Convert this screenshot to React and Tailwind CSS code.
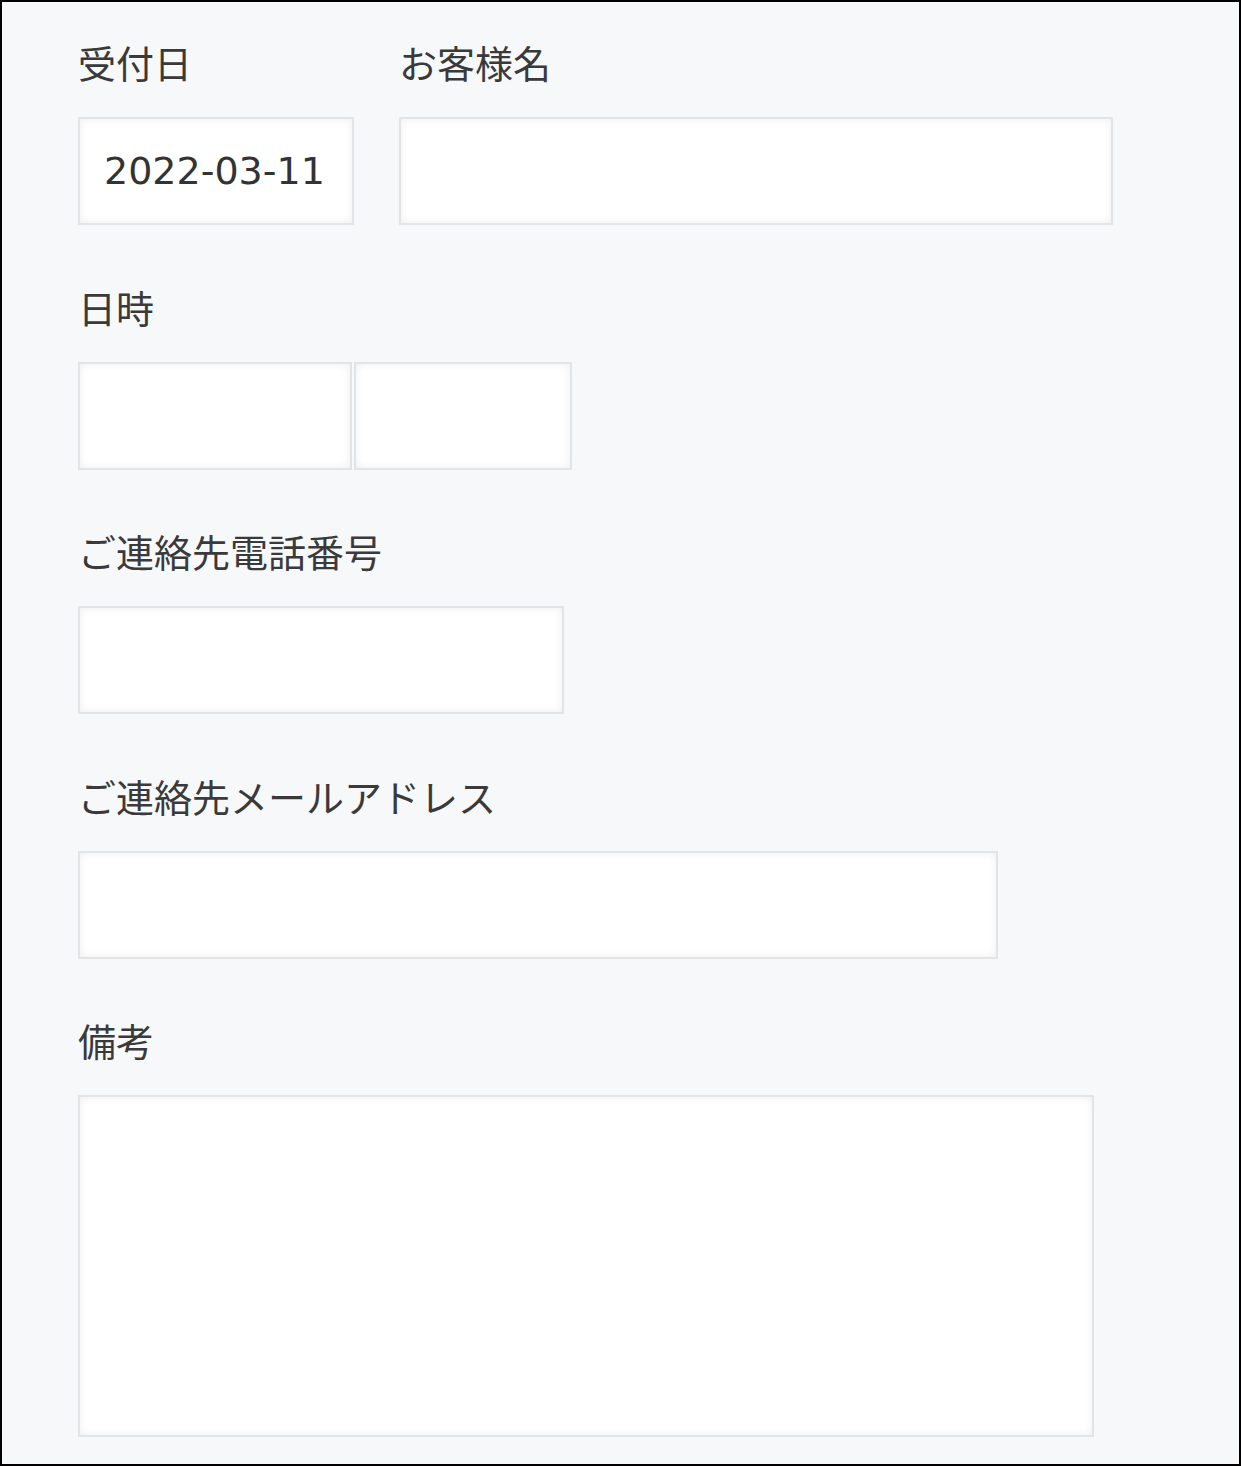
import React from "react";

const inputCls =
  "h-[108px] border-2 border-[#e2e5e7] bg-white shadow-[inset_0_0_8px_rgba(0,0,0,0.07)] outline-none";

function Label({ children }) {
  return (
    <div className="h-[38px] leading-[38px] text-[38px] text-[#3a3a3a] whitespace-nowrap" style={{ fontFamily: '"Noto Sans CJK JP", "Noto Sans", sans-serif' }}>
      {children}
    </div>
  );
}

export default function App() {
  return (
    <div className="w-[1241px] h-[1466px] border-2 border-black bg-[#f7f8fa] box-border pl-[76px] pt-[41px] overflow-hidden">
      <div className="flex gap-[45px]">
        <div className="flex flex-col">
          <Label>受付日</Label>
          <div className={`mt-[36px] w-[276px] ${inputCls} flex items-center pl-[24px] text-[38px] text-[#333]`} style={{ fontFamily: '"DejaVu Sans", sans-serif' }}>
            2022-03-11
          </div>
        </div>
        <div className="flex flex-col">
          <Label>お客様名</Label>
          <div className={`mt-[36px] w-[714px] ${inputCls}`} />
        </div>
      </div>

      <div className="mt-[62.5px] flex flex-col">
        <Label>日時</Label>
        <div className="mt-[36px] flex gap-[2px]">
          <div className={`w-[274px] ${inputCls}`} />
          <div className={`w-[218px] ${inputCls}`} />
        </div>
      </div>

      <div className="mt-[62.5px] flex flex-col">
        <Label>ご連絡先電話番号</Label>
        <div className={`mt-[36px] w-[486px] ${inputCls}`} />
      </div>

      <div className="mt-[62.5px] flex flex-col">
        <Label>ご連絡先メールアドレス</Label>
        <div className={`mt-[36px] w-[920px] ${inputCls}`} />
      </div>

      <div className="mt-[62.5px] flex flex-col">
        <Label>備考</Label>
        <div className={`mt-[36px] w-[1016px] h-[342px] border-2 border-[#e2e5e7] bg-white shadow-[inset_0_0_8px_rgba(0,0,0,0.07)]`} />
      </div>
    </div>
  );
}
